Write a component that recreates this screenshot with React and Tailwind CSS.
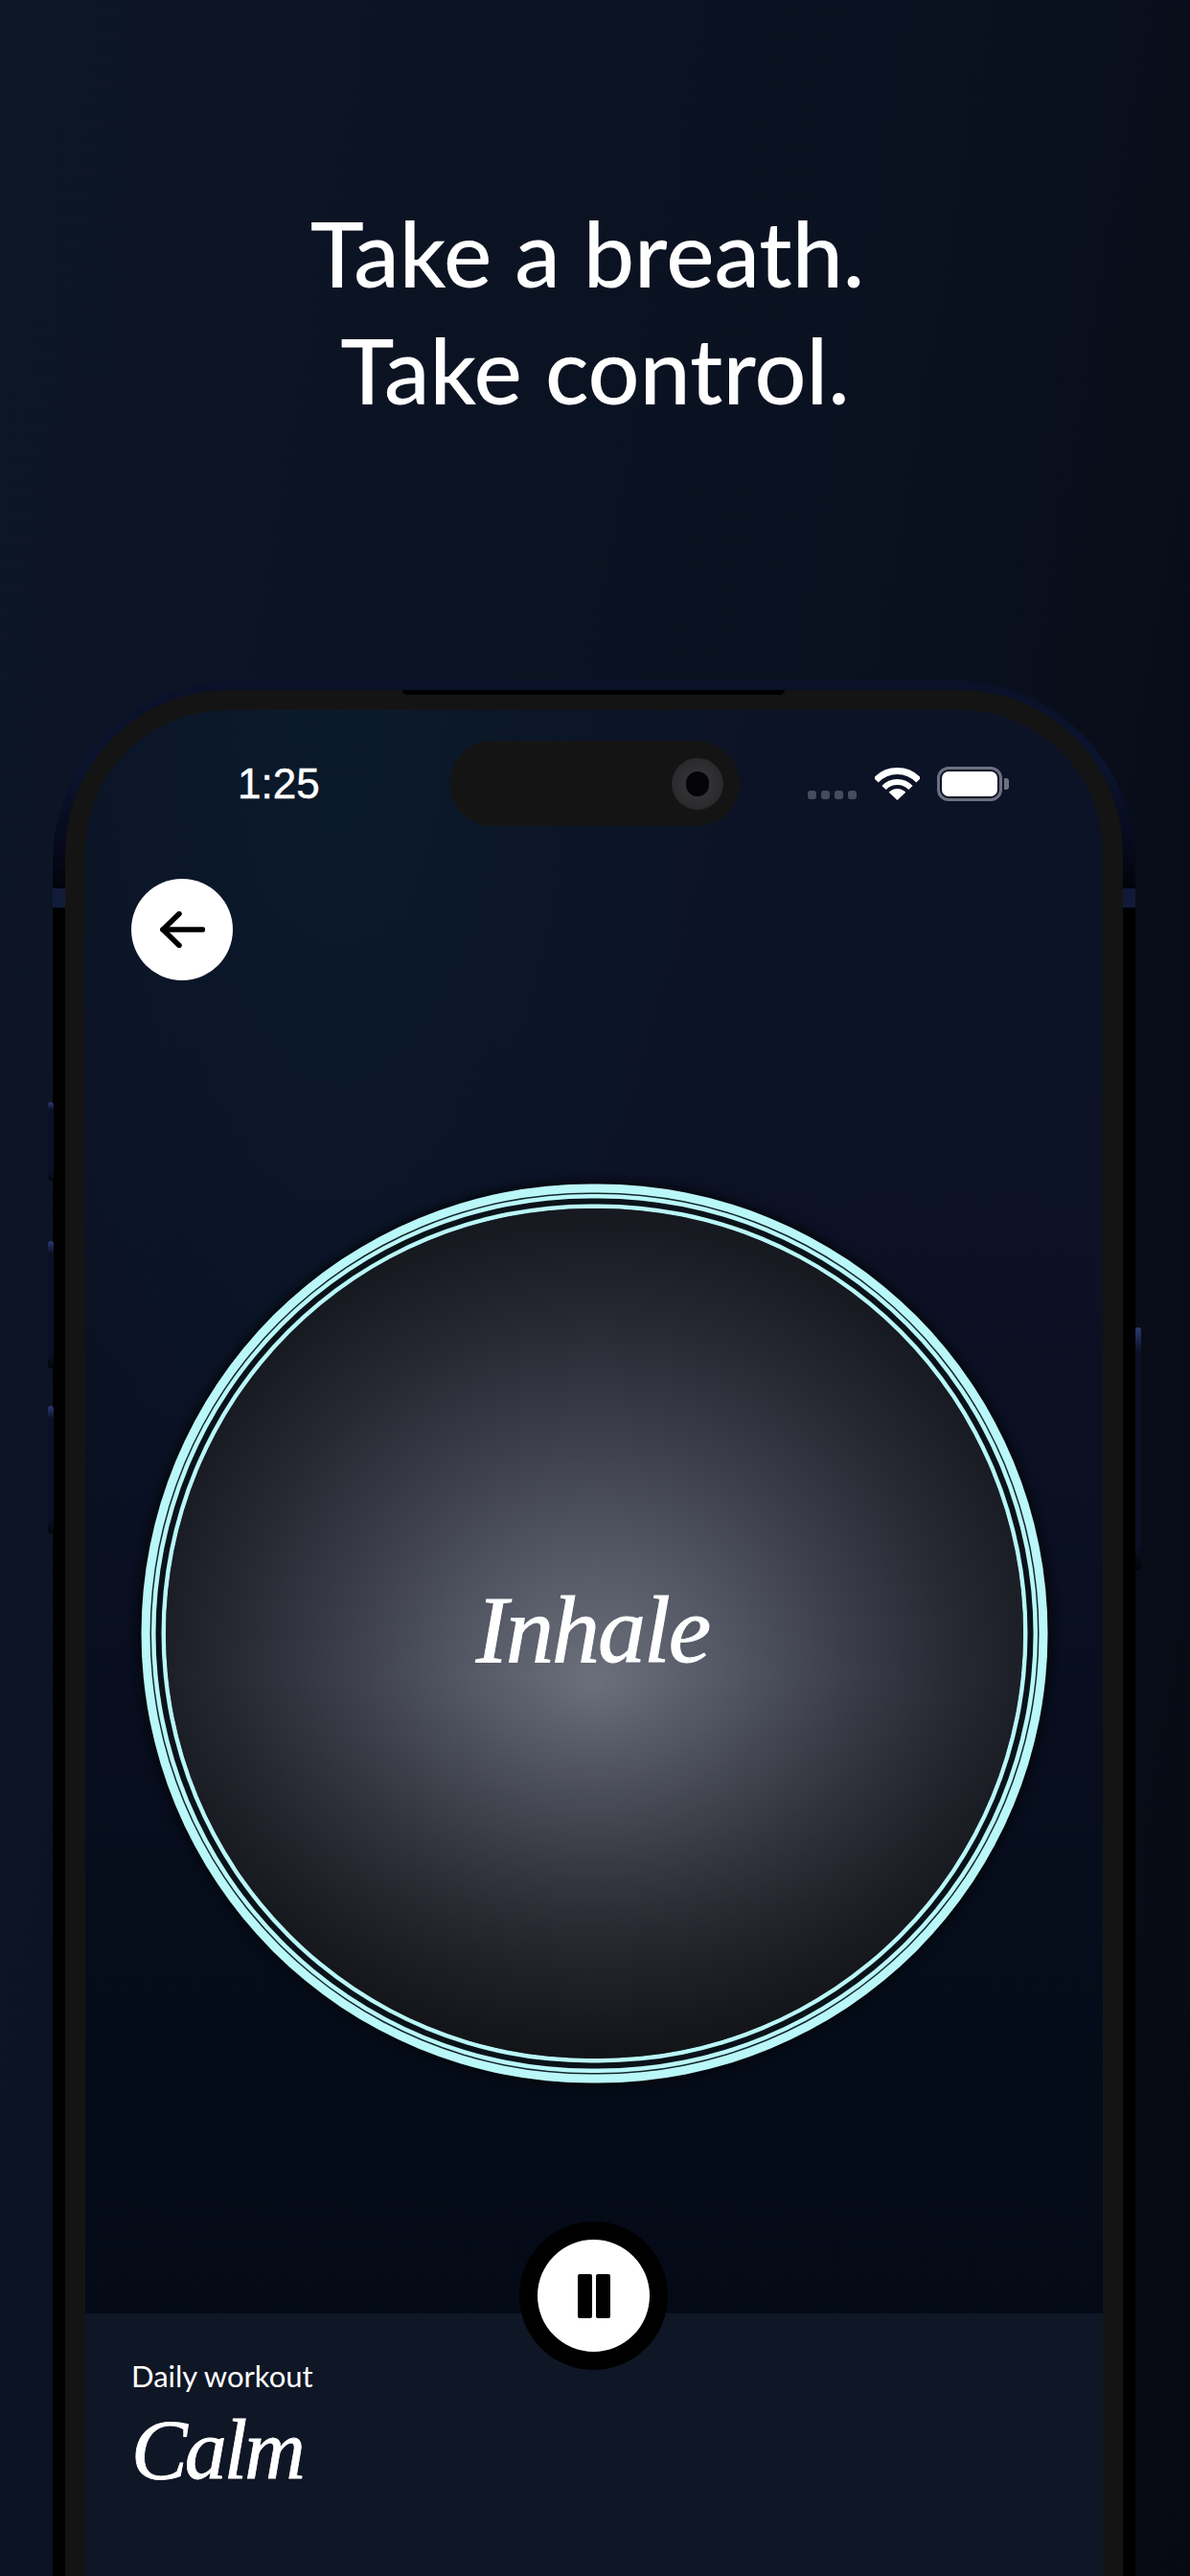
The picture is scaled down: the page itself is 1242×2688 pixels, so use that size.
const sideButtons = [
  'left-[-5px] top-[440px] h-[82px]',
  'left-[-5px] top-[585px] h-[133px]',
  'left-[-5px] top-[757px] h-[133px]',
  'right-[-6px] top-[675px] h-[253px]',
];

const WifiIcon = () => (
  <svg width="47" height="34" viewBox="0 0 47 34" fill="none" stroke="white" strokeLinecap="butt">
    <path d="M1.2 13.2A30.5 30.5 0 0 1 45.8 13.2" strokeWidth="7" />
    <path d="M9.6 21A19 19 0 0 1 37.4 21" strokeWidth="6" />
    <path d="M23.5 34L14.7 25.8A12 12 0 0 1 32.3 25.8Z" fill="white" stroke="none" />
  </svg>
);

const ArrowIcon = () => (
  <svg width="47" height="38" viewBox="0 0 47 38" fill="none" stroke="black" strokeWidth="5.5" strokeLinecap="round" strokeLinejoin="round">
    <path d="M3 19H44.5" />
    <path d="M20 2.5L3 19L20 35.5" />
  </svg>
);

const StatusBar = () => (
  <div className="flex h-[176px] items-start justify-between pl-[159px] pr-[98px] pt-[59px]">
    <span className="font-['Liberation_Sans'] text-[44px] leading-[36px] font-normal text-white [-webkit-text-stroke:0.5px_white]">1:25</span>
    <div className="flex items-end">
      <div className="mb-[2px] flex gap-[5px]">
        {[0, 1, 2, 3].map((dot) => (
          <span key={dot} className="h-[9px] w-[9px] rounded-[3px] bg-[#474c5c]" />
        ))}
      </div>
      <div className="ml-[19px] mb-[1px]">
        <WifiIcon />
      </div>
      <div className="ml-[18px] flex items-center">
        <div className="h-[36px] w-[68px] rounded-[12px] border-[3px] border-[#6d7080] p-[2px]">
          <div className="h-full w-full rounded-[7px] bg-white" />
        </div>
        <span className="ml-[2px] h-[12px] w-[5px] rounded-r-[3px] bg-[#6d7080]" />
      </div>
    </div>
  </div>
);

const App = () => {
  return (
    <div className="flex h-[2688px] flex-col items-center overflow-hidden bg-[linear-gradient(100deg,#0d1627_0%,#0a1120_55%,#060a12_100%)] font-['Lato',sans-serif]">
      <h1 className="pt-[202px] text-center text-[95px] leading-[122px] font-medium text-white">
        <span className="block pr-[16px]">Take a breath.</span>
        <span className="block">Take control.</span>
      </h1>

      <div className="relative mr-[2px] mt-[264px] w-[1130px] shrink-0 rounded-t-[190px] bg-[linear-gradient(180deg,#0a1128_0px,#0b132e_90px,#060a1c_170px,#02040c_216px,#000_240px,#000_100%)] px-[13px] pt-[10px]">
        {sideButtons.map((pos) => (
          <span
            key={pos}
            className={`absolute w-[6px] rounded-[3px] bg-[linear-gradient(180deg,#2c3a70_0%,#0a1026_10%,#0a1026_90%,#030408_100%)] ${pos}`}
          />
        ))}
        <span className="absolute left-0 top-[217px] h-[20px] w-[13px] bg-[#111c3a]" />
        <span className="absolute right-0 top-[217px] h-[20px] w-[13px] bg-[#101a38]" />

        <div className="relative rounded-t-[170px] bg-[#141414] px-[21px] pt-[21px]">
          <div className="absolute left-[352px] top-0 h-[5px] w-[399px] rounded-b-[8px] bg-black" />

          <div className="relative flex h-[2000px] flex-col rounded-t-[148px] bg-[radial-gradient(ellipse_at_25%_0%,#0a1a2b_0%,transparent_38%),linear-gradient(180deg,#0c1326_0%,#0c1125_26%,#0a0f22_42%,#050c19_68%,#030914_100%)]">
            <div className="absolute left-[380px] top-[32px] flex h-[89px] w-[303px] items-center justify-end rounded-[45px] bg-[#141414] pr-[17px]">
              <div className="flex h-[54px] w-[54px] items-center justify-center rounded-full bg-[radial-gradient(circle,#3a3a3c_0%,#2c2c2e_60%,#232325_100%)]">
                <div className="h-[26px] w-[24px] rounded-full bg-[#050508]" />
              </div>
            </div>

            <StatusBar />

            <button className="ml-[48px] flex h-[106px] w-[106px] shrink-0 items-center justify-center rounded-full bg-white">
              <ArrowIcon />
            </button>

            <div className="mt-[238px] flex h-[887px] w-[895px] shrink-0 items-center justify-center self-center rounded-full bg-[linear-gradient(180deg,transparent_55%,rgba(0,0,0,0.5)_100%),radial-gradient(circle_at_50%_56%,#6c707b_0px,#555965_130px,#3c3f4a_260px,#262932_380px,#171a21_480px,#12141a_560px)] shadow-[0_0_0_4.5px_#baf7f8,0_0_0_10.5px_#0a1219,0_0_0_15px_#baf7f8,0_0_0_16.5px_#12262c,0_0_0_25.5px_#baf7f8,0_0_10px_29px_#05070c]">
              <span className="mb-[8px] mr-[3px] font-['Liberation_Serif',serif] text-[100px] leading-none tracking-[-2px] text-white italic [-webkit-text-stroke:1px_white]">
                Inhale
              </span>
            </div>

            <div className="relative mt-[266px] flex-1 bg-[#0f1625] pl-[48px] pt-[47px]">
              <button className="absolute left-[453px] top-[-96px] flex h-[155px] w-[155px] items-center justify-center rounded-full bg-black">
                <span className="flex h-[117px] w-[117px] items-center justify-center gap-[4px] rounded-full bg-white">
                  <span className="h-[46px] w-[15px] rounded-[2px] bg-black" />
                  <span className="h-[46px] w-[15px] rounded-[2px] bg-black" />
                </span>
              </button>
              <p className="text-[31px] leading-[36px] text-white">Daily workout</p>
              <p className="mt-[10px] font-['Liberation_Serif',serif] text-[88px] leading-[100px] tracking-[-3px] text-white italic [-webkit-text-stroke:0.8px_white]">
                Calm
              </p>
            </div>
          </div>
        </div>
      </div>
    </div>
  );
};

export default App;
